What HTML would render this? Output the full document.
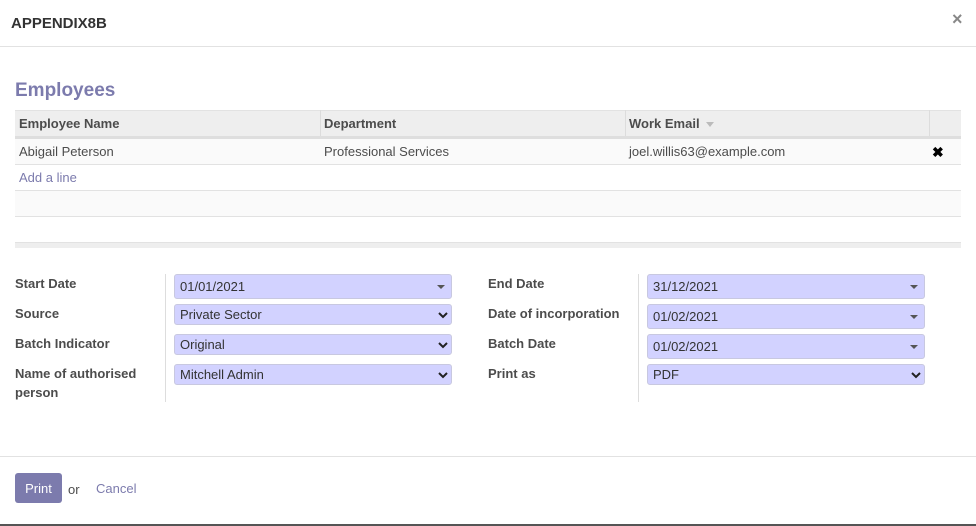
<!DOCTYPE html>
<html><head><meta charset="utf-8"><style>
*{box-sizing:border-box;margin:0;padding:0}
body{width:976px;height:526px;background:#fff;font-family:"Liberation Sans",sans-serif;font-size:13px;color:#4c4c4c;position:relative;overflow:hidden}
.a{position:absolute}
.lbl{position:absolute;font-weight:bold;color:#4c4c4c;font-size:13px;line-height:19px}
.inp{position:absolute;background:#d2d2ff;border:1px solid #c8c8e0;border-radius:3px;font-size:13px;color:#333;padding-left:5px;line-height:22px}
.dd::after{content:"";position:absolute;right:6px;top:10px;border-left:4px solid transparent;border-right:4px solid transparent;border-top:4px solid #555}
.sel svg{position:absolute;right:3px;top:6px}
.td{position:absolute;font-size:13px;line-height:25px;padding-left:4px}
</style></head><body>
<div class="a" style="left:11px;top:15px;font-size:15px;font-weight:bold;color:#333">APPENDIX8B</div>
<div class="a" style="left:952px;top:9px;font-size:18px;font-weight:bold;color:#888">×</div>
<div class="a" style="left:0;top:46px;width:976px;height:1px;background:#e2e2e2"></div>
<div class="a" style="left:15px;top:80px;font-size:19px;font-weight:bold;color:#7c7bad">Employees</div>

<div class="a" style="left:15px;top:110px;width:946px;height:26px;background:#eee;border-top:1px solid #e2e2e2"></div>
<div class="a" style="left:15px;top:136px;width:946px;height:3px;background:#dedede"></div>
<div class="a" style="left:320px;top:110px;width:1px;height:26px;background:#dcdcdc"></div>
<div class="a" style="left:625px;top:110px;width:1px;height:26px;background:#dcdcdc"></div>
<div class="a" style="left:929px;top:110px;width:1px;height:26px;background:#dcdcdc"></div>
<div class="td" style="left:15px;top:111px;font-weight:bold">Employee Name</div>
<div class="td" style="left:320px;top:111px;font-weight:bold">Department</div>
<div class="td" style="left:625px;top:111px;font-weight:bold">Work Email <span style="display:inline-block;border-left:4px solid transparent;border-right:4px solid transparent;border-top:5px solid #bbb;vertical-align:middle;margin-left:3px"></span></div>

<div class="a" style="left:15px;top:139px;width:946px;height:26px;background:#fafafa;border-bottom:1px solid #e2e2e2"></div>
<div class="td" style="left:15px;top:139px">Abigail Peterson</div>
<div class="td" style="left:320px;top:139px">Professional Services</div>
<div class="td" style="left:625px;top:139px">joel.willis63@example.com</div>
<div class="a" style="left:932px;top:144px;font-size:14px;font-weight:bold;color:#000">✖</div>
<div class="a" style="left:15px;top:165px;width:946px;height:26px;border-bottom:1px solid #e2e2e2"></div>
<div class="td" style="left:15px;top:165px;color:#7c7bad">Add a line</div>
<div class="a" style="left:15px;top:191px;width:946px;height:26px;background:#fafafa;border-bottom:1px solid #e2e2e2"></div>
<div class="a" style="left:15px;top:242px;width:946px;height:6px;background:#eee;border-top:1px solid #e2e2e2"></div>

<div class="a" style="left:165px;top:274px;width:1px;height:128px;background:#ddd"></div>
<div class="a" style="left:638px;top:274px;width:1px;height:128px;background:#ddd"></div>

<div class="lbl" style="left:15px;top:274px">Start Date</div>
<div class="lbl" style="left:15px;top:304px">Source</div>
<div class="lbl" style="left:15px;top:334px">Batch Indicator</div>
<div class="lbl" style="left:15px;top:364px;width:140px">Name of authorised person</div>
<div class="lbl" style="left:488px;top:274px">End Date</div>
<div class="lbl" style="left:488px;top:304px">Date of incorporation</div>
<div class="lbl" style="left:488px;top:334px">Batch Date</div>
<div class="lbl" style="left:488px;top:364px">Print as</div>

<div class="inp dd" style="left:174px;top:274px;width:278px;height:25px;line-height:23px">01/01/2021</div>
<div class="inp sel" style="left:174px;top:304px;width:278px;height:21px;line-height:19px">Private Sector<svg width="10" height="8" viewBox="0 0 10 8"><path d="M1 2l4 4 4-4" fill="none" stroke="#222" stroke-width="2"/></svg></div>
<div class="inp sel" style="left:174px;top:334px;width:278px;height:21px;line-height:19px">Original<svg width="10" height="8" viewBox="0 0 10 8"><path d="M1 2l4 4 4-4" fill="none" stroke="#222" stroke-width="2"/></svg></div>
<div class="inp sel" style="left:174px;top:364px;width:278px;height:21px;line-height:19px">Mitchell Admin<svg width="10" height="8" viewBox="0 0 10 8"><path d="M1 2l4 4 4-4" fill="none" stroke="#222" stroke-width="2"/></svg></div>

<div class="inp dd" style="left:647px;top:274px;width:278px;height:25px;line-height:23px">31/12/2021</div>
<div class="inp dd" style="left:647px;top:304px;width:278px;height:25px;line-height:23px">01/02/2021</div>
<div class="inp dd" style="left:647px;top:334px;width:278px;height:25px;line-height:23px">01/02/2021</div>
<div class="inp sel" style="left:647px;top:364px;width:278px;height:21px;line-height:19px">PDF<svg width="10" height="8" viewBox="0 0 10 8"><path d="M1 2l4 4 4-4" fill="none" stroke="#222" stroke-width="2"/></svg></div>

<div class="a" style="left:0;top:456px;width:976px;height:1px;background:#e2e2e2"></div>
<div class="a" style="left:15px;top:473px;width:47px;height:30px;background:#7c7bad;border-radius:3px;color:#fff;text-align:center;line-height:31px">Print</div>
<div class="a" style="left:68px;top:482px;color:#4c4c4c">or</div>
<div class="a" style="left:96px;top:481px;color:#7c7bad">Cancel</div>
<div class="a" style="left:0;top:524px;width:976px;height:2px;background:#555"></div>
</body></html>
